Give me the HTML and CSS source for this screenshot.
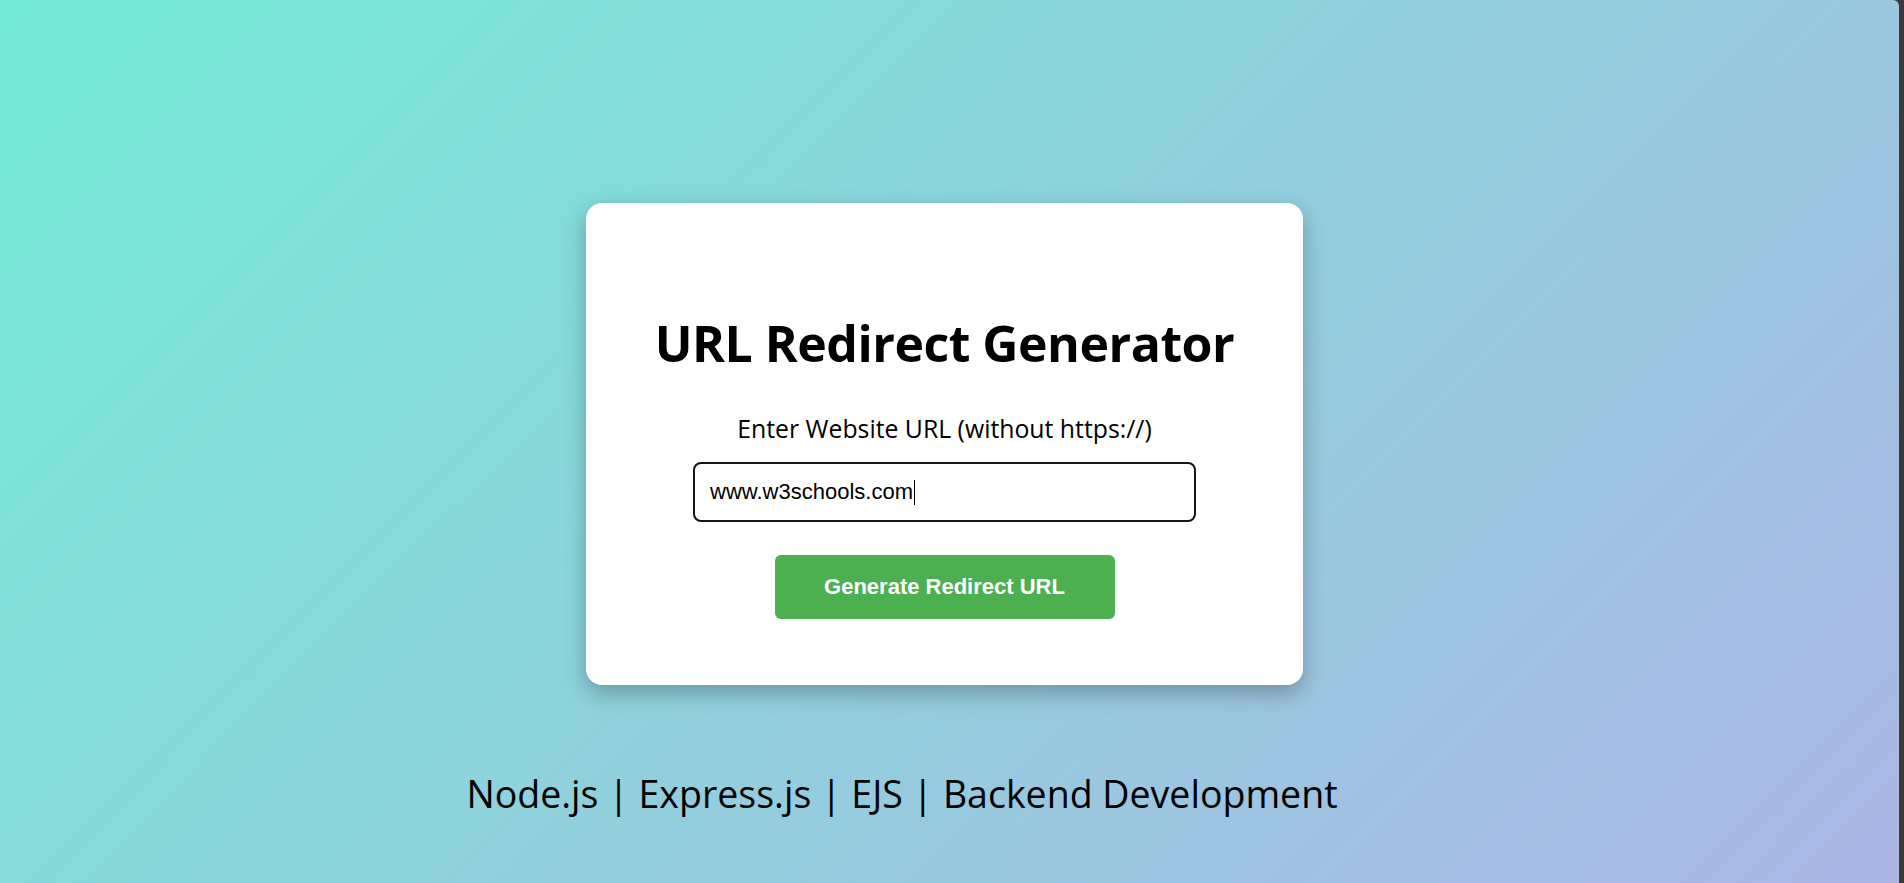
FILE: index.html
```html
<!DOCTYPE html>
<html lang="en">
<head>
<meta charset="utf-8">
<title>URL Redirect Generator</title>
<link rel="stylesheet" href="styles.css">
</head>
<body>
  <div class="viewport">
    <main class="page">
      <section class="card">
        <h1 class="title">URL Redirect Generator</h1>
        <form class="form" onsubmit="return false">
          <label class="label" for="url">Enter Website URL (without https://)</label>
          <div class="field">
            <input class="input" id="url" type="text" value="www.w3schools.com">
            <span class="caret"></span>
          </div>
          <button class="button" type="submit">Generate Redirect URL</button>
        </form>
      </section>
      <p class="footer">Node.js | Express.js | EJS | Backend Development</p>
    </main>
    <div class="edge"></div>
  </div>
</body>
</html>
```

FILE: styles.css
```css
* { box-sizing: border-box; }
html, body { margin: 0; padding: 0; height: 100%; }
body {
  background: #3a3a3a;
  overflow: hidden;
}
.viewport {
  display: flex;
  height: 883px;
}
.page {
  flex: 1;
  display: flex;
  flex-direction: column;
  align-items: center;
  padding: 203px 10px 0 0;
  background: linear-gradient(135deg, #74ebd5 0%, #acb6e5 100%);
  border-top-right-radius: 6px;
}
.edge {
  width: 5px;
  background: #3a3a3a;
}
.card {
  width: 717px;
  padding: 110px 0 66px;
  background: #ffffff;
  border-radius: 16px;
  box-shadow: 0 8px 22px rgba(0, 0, 0, 0.28);
  display: flex;
  flex-direction: column;
  align-items: center;
}
.title {
  margin: 0;
  font-family: "Open Sans", "Noto Sans", sans-serif;
  font-weight: 700;
  font-size: 50px;
  line-height: 60px;
  color: #000;
  letter-spacing: -0.5px;
}
.form {
  margin-top: 41px;
  display: flex;
  flex-direction: column;
  align-items: center;
}
.label {
  font-family: "Open Sans", "Noto Sans", sans-serif;
  font-size: 24.8px;
  line-height: 28px;
  color: #000;
}
.field {
  position: relative;
  margin-top: 20px;
}
.input {
  display: block;
  width: 503px;
  height: 60px;
  padding: 0 15px;
  border: 2px solid #161616;
  border-radius: 8px;
  font-family: "Liberation Sans", Arial, sans-serif;
  font-size: 22px;
  color: #000;
  background: #fff;
  outline: none;
}
.caret {
  position: absolute;
  left: 221px;
  top: 18px;
  width: 1px;
  height: 25px;
  background: #000;
}
.button {
  margin-top: 33px;
  width: 340px;
  height: 64px;
  border: none;
  border-radius: 6px;
  background: #4caf50;
  color: #fff;
  font-family: "Liberation Sans", Arial, sans-serif;
  font-weight: 700;
  font-size: 22px;
  cursor: pointer;
}
.footer {
  margin: 86px 85px 0 0;
  font-family: "Open Sans", "Noto Sans", sans-serif;
  font-size: 37.5px;
  line-height: 45px;
  color: #000;
}
```
